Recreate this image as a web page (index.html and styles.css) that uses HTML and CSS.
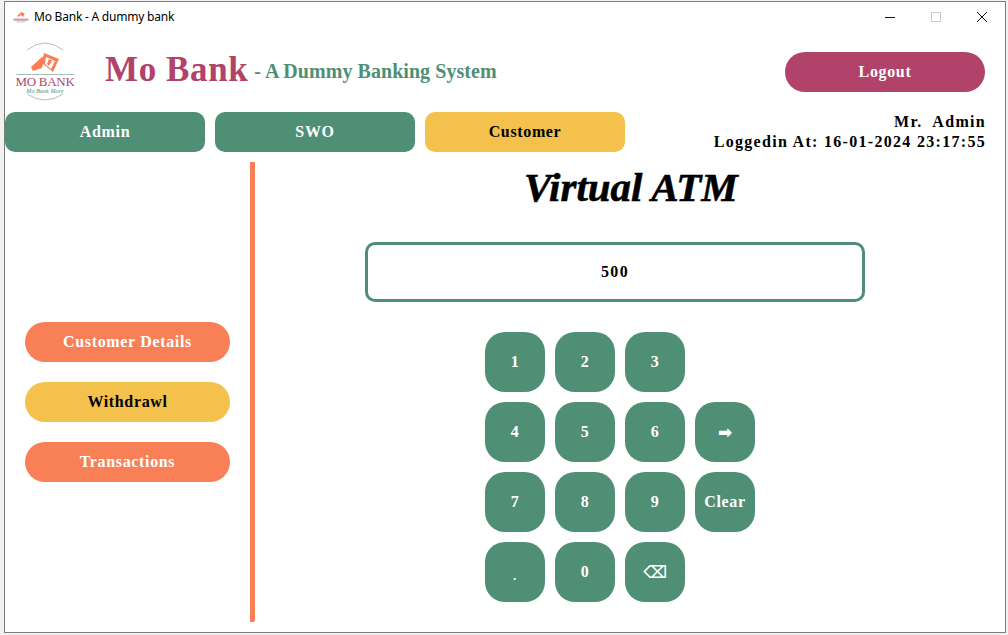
FILE: index.html
```html
<!DOCTYPE html>
<html lang="en">
<head>
<meta charset="utf-8">
<title>Mo Bank - A dummy bank</title>
<link rel="stylesheet" href="styles.css">
</head>
<body>
<div class="window">
  <div class="titlebar">
    <svg class="app-icon" viewBox="0 0 60 60" aria-hidden="true">
      <path d="M29 11 L44 17 L38 30 L27 21 Z" fill="#f98056"/>
      <path d="M16 25 L27 15 L32 13 L28 21 L27 26 L18 29 Z" fill="#f98056"/>
      <rect x="2" y="36" width="56" height="8" fill="#b14269" opacity=".55"/>
      <rect x="14" y="47" width="32" height="3" fill="#4e8f76" opacity=".55"/>
    </svg>
    <span class="title-text">Mo Bank - A dummy bank</span>
    <div class="controls">
      <svg class="ctl" viewBox="0 0 46 30" aria-hidden="true"><path d="M18 15.5h10" stroke="#111" stroke-width="1"/></svg>
      <svg class="ctl" viewBox="0 0 46 30" aria-hidden="true"><rect x="18.5" y="10.5" width="9" height="9" fill="none" stroke="#ccc"/></svg>
      <svg class="ctl" viewBox="0 0 46 30" aria-hidden="true"><path d="M18 10l10 10M28 10l-10 10" stroke="#111" stroke-width="1"/></svg>
    </div>
  </div>

  <header class="brandbar">
    <div class="logo">
      <svg class="logo-art" viewBox="0 0 60 60" aria-hidden="true">
        <path d="M12 8 Q30 -6 48 8" fill="none" stroke="#7fa999" stroke-width=".7"/>
        <path d="M29 11 L44 17 L38 30 L27 21 Z" fill="#f98056"/>
        <path d="M31 15 L40 19 L36 27 L30 22 Z" fill="#fff"/>
        <path d="M34 17 L37 18.5 L34 24 L32 22 Z" fill="#f98056"/>
        <path d="M16 25 L27 15 L32 13 L28 21 L27 26 L18 29 Z" fill="#f98056"/>
        <path d="M1 32.5 H59" stroke="#7fa999" stroke-width=".7"/>
        <path d="M12 52 Q30 64 48 52" fill="none" stroke="#7fa999" stroke-width=".7"/>
      </svg>
      <span class="logo-name">MO BANK</span>
      <span class="logo-tag">Mo Bank More</span>
    </div>
    <h1 class="brand">Mo Bank</h1>
    <p class="tagline">- A Dummy Banking System</p>
    <button class="logout">Logout</button>
  </header>

  <nav class="tabs">
    <button class="tab">Admin</button>
    <button class="tab">SWO</button>
    <button class="tab tab-active">Customer</button>
    <div class="user">
      <div>Mr.&nbsp; Admin</div>
      <div>Loggedin At: 16-01-2024 23:17:55</div>
    </div>
  </nav>

  <main class="body">
    <aside class="side">
      <button class="pill">Customer Details</button>
      <button class="pill pill-active">Withdrawl</button>
      <button class="pill">Transactions</button>
    </aside>
    <section class="atm">
      <h2 class="atm-title">Virtual ATM</h2>
      <div class="display">500</div>
      <div class="keypad">
        <button class="key">1</button>
        <button class="key">2</button>
        <button class="key">3</button>
        <span></span>
        <button class="key">4</button>
        <button class="key">5</button>
        <button class="key">6</button>
        <button class="key key-sym">&#x27A1;&#xFE0E;</button>
        <button class="key">7</button>
        <button class="key">8</button>
        <button class="key">9</button>
        <button class="key">Clear</button>
        <button class="key key-dot">.</button>
        <button class="key">0</button>
        <button class="key key-sym">&#x232B;</button>
      </div>
    </section>
  </main>
</div>
</body>
</html>
```
FILE: styles.css
```css
* { box-sizing: border-box; }
html, body { margin: 0; height: 100%; background: #f1f1f1; }
body { overflow: hidden; padding: 1px 0 0 4px; }
button { border: 0; padding: 0; font: inherit; letter-spacing: .65px; color: #fff; cursor: pointer; }

.window {
  width: 1002px;
  height: 632px;
  border: 1px solid #7d7d7d;
  background: #fff;
  display: flex;
  flex-direction: column;
  font-family: "Liberation Serif", serif;
  font-weight: 700;
  font-size: 16px;
  letter-spacing: 1.3px;
  color: #000;
}

.titlebar {
  height: 29px;
  flex: none;
  display: flex;
  align-items: center;
  padding-left: 8px;
  font-family: "Noto Sans", sans-serif;
  font-weight: 400;
  font-size: 12px;
  letter-spacing: -.22px;
}
.app-icon { width: 16px; height: 16px; margin-right: 5px; }
.controls { margin-left: auto; display: flex; }
.ctl { width: 46px; height: 30px; display: block; }

.brandbar {
  height: 81px;
  flex: none;
  display: flex;
  align-items: center;
  padding-right: 20px;
}
.logo {
  width: 60px;
  height: 60px;
  margin-left: 10px;
  position: relative;
  flex: none;
}
.logo-art { width: 60px; height: 60px; display: block; }
.logo-name {
  position: absolute;
  left: 0; right: 0; top: 33px;
  text-align: center;
  font: 400 13px/14px "Liberation Serif", serif;
  letter-spacing: -.3px;
  color: #a84a72;
  white-space: nowrap;
}
.logo-tag {
  position: absolute;
  left: 0; right: 0; top: 45px;
  text-align: center;
  font: italic 400 6px/8px "Liberation Serif", serif;
  letter-spacing: .1px;
  color: #4e8f76;
  white-space: nowrap;
}
.brand {
  margin: 0 0 3px 30px;
  font-size: 35px;
  line-height: 40px;
  color: #b14269;
  letter-spacing: .6px;
  white-space: nowrap;
}
.tagline {
  margin: 0 0 1px 6px;
  font-size: 20px;
  line-height: 24px;
  color: #4e8f76;
  letter-spacing: .05px;
  white-space: nowrap;
}
.logout {
  margin-left: auto;
  width: 200px;
  height: 40px;
  border-radius: 20px;
  background: #b14269;
}

.tabs {
  height: 50px;
  flex: none;
  display: flex;
  align-items: flex-start;
  gap: 10px;
  padding-right: 19px;
}
.tab {
  width: 200px;
  height: 40px;
  border-radius: 10px;
  background: #4e8f76;
}
.tab-active { background: #f3c14c; color: #000; }
.user {
  margin-left: auto;
  text-align: right;
  line-height: 20px;
  white-space: nowrap;
}

.body { flex: 1; display: flex; min-height: 0; }
.side {
  width: 250px;
  flex: none;
  height: 460px;
  border-right: 5px solid #f98056;
  border-radius: 0 0 2px 0;
  display: flex;
  flex-direction: column;
  justify-content: center;
  gap: 20px;
  padding: 20px 0 0 20px;
}
.pill {
  width: 205px;
  height: 40px;
  border-radius: 20px;
  background: #f98056;
}
.pill-active { background: #f3c14c; color: #000; }

.atm { flex: 1; display: flex; flex-direction: column; align-items: flex-start; }
.atm-title {
  margin: 0 0 0 269px;
  font-style: italic;
  font-size: 41px;
  line-height: 50px;
  letter-spacing: 0;
  white-space: nowrap;
  -webkit-text-stroke: .6px #000;
}
.display {
  margin: 30px 0 0 110px;
  width: 500px;
  height: 60px;
  border: 3px solid #4e8f76;
  border-radius: 10px;
  display: flex;
  align-items: center;
  justify-content: center;
}
.keypad {
  margin: 30px 0 0 230px;
  display: grid;
  grid-template-columns: repeat(4, 60px);
  grid-auto-rows: 60px;
  gap: 10px;
}
.key { border-radius: 20px; background: #4e8f76; }
.key-sym { font-family: "DejaVu Sans", sans-serif; font-size: 17px; letter-spacing: 0; }
.key-dot { font-size: 13px; padding-top: 8px; }
```
